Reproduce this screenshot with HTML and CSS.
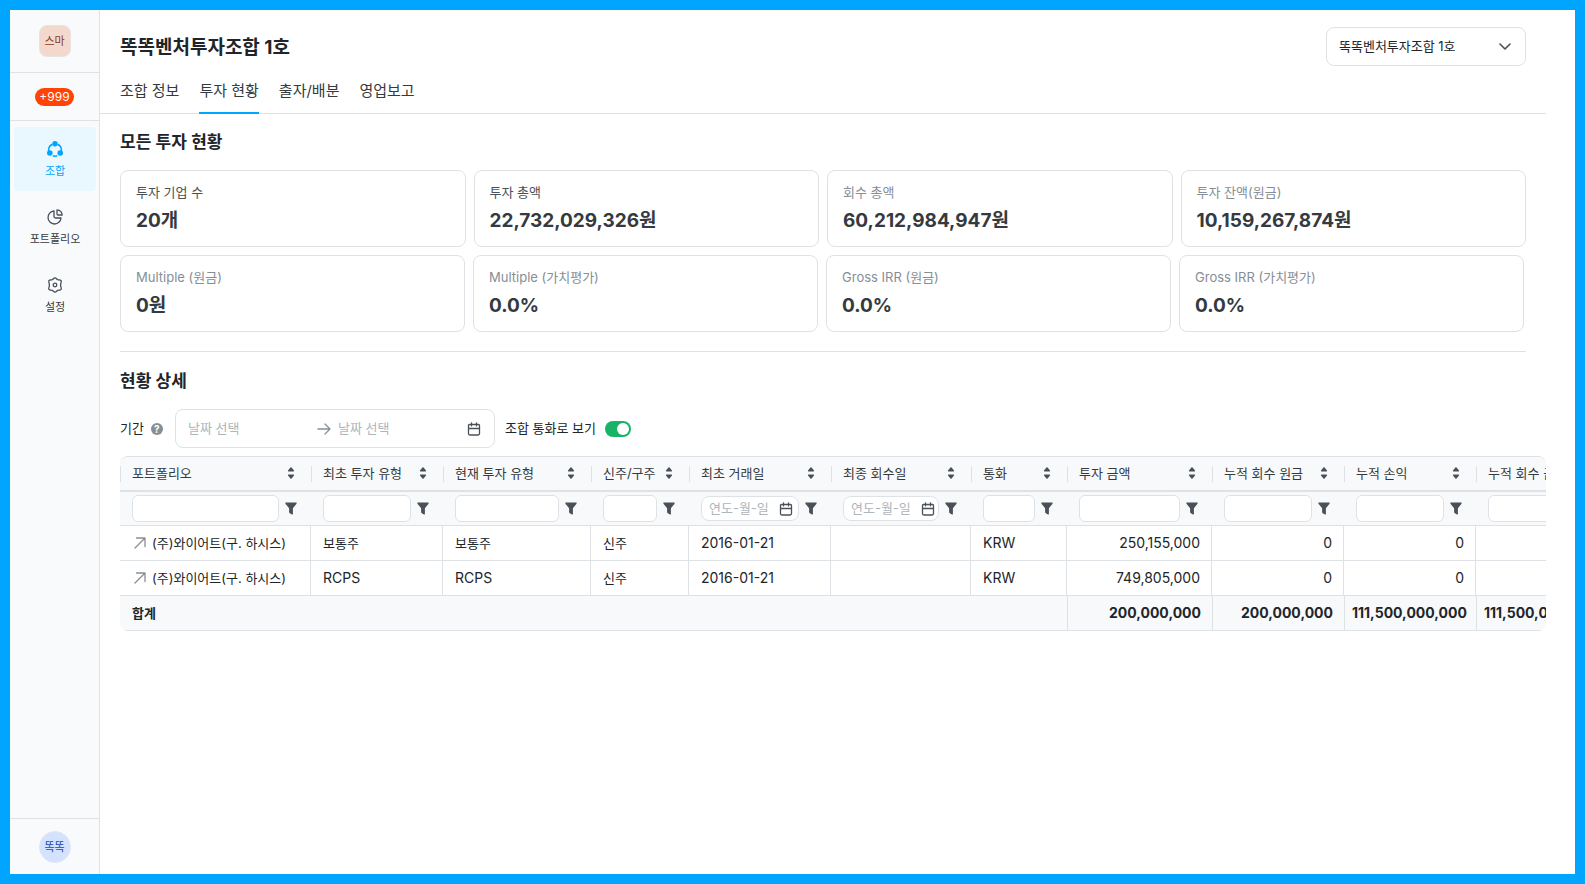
FILE: index.html
```html
<!DOCTYPE html>
<html lang="ko">
  <head>
    <meta charset="utf-8" />
    <meta name="viewport" content="width=device-width,initial-scale=1.0" />
    <title>똑똑벤처투자조합 1호</title>
    <link rel="stylesheet" href="styles.css">
  </head>

  <body>
    <svg class="sprite" aria-hidden="true">
      <symbol id="sort" viewBox="0 0 8 12">
        <path d="M3.400.6q.6-.7 1.200 0l2.400 3q.5.9-.5 1H1.500q-1-.1-.5-1zM3.400 11.400q.6.7 1.200 0l2.400-3q.5-.9-.5-1H1.500q-1 .1-.5 1z" />
      </symbol>
      <symbol id="funnel" viewBox="0 0 12 13">
        <path d="M.4.4h11.2c.3 1-.3 1.6-.9 2.3L7.9 6.200V12c0 .6-.5.7-1 .4l-2-1.200c-.5-.3-.8-.5-.8-1V6.200L1.300 2.700C.7 2 .1 1.400.4.4z" />
      </symbol>
      <symbol id="calendar" viewBox="0 0 14 14">
        <path d="M2.500 2.500h9a1 1 0 0 1 1 1v8a1.500 1.500 0 0 1-1.500 1.500H3a1.500 1.500 0 0 1-1.500-1.500v-8a1 1 0 0 1 1-1zM1.500 6.500h11M4.500.8v3M9.500.8v3" />
      </symbol>
      <symbol id="open" viewBox="0 0 12 12">
        <path d="M1 11 11 1M2.500 1H11v8.500" />
      </symbol>
    </svg>

    <aside class="sidebar">
      <div class="sidebar-top">
        <span class="logo">스마</span>
      </div>
      <div class="sidebar-alert">
        <span class="badge">+999</span>
      </div>
      <nav class="menu">
        <a class="menu-item active" href="#">
          <svg width="16" height="16" viewBox="0 0 16 16">
            <g fill="currentColor">
              <circle cx="8" cy="2.800" r="2.700" />
              <circle cx="2.800" cy="12" r="2.800" />
              <circle cx="13.200" cy="12" r="2.800" />
            </g>
            <path d="M5.500 3.200A6.500 6.500 0 0 0 1.700 10M10.500 3.200A6.500 6.500 0 0 1 14.300 10M5.700 14.700a6.500 6.500 0 0 0 4.600 0" fill="none" stroke="currentColor" stroke-width="1.500" />
          </svg>
          조합
        </a>
        <a class="menu-item" href="#">
          <svg class="line" width="16" height="16" viewBox="0 0 16 16">
            <path d="M7 2A6.500 6.500 0 1 0 14 9H8.500A1.500 1.500 0 0 1 7 7.500z" />
            <path d="M10 .8c2.800.2 5 2.400 5.200 5.200H11a1 1 0 0 1-1-1z" />
          </svg>
          포트폴리오
        </a>
        <a class="menu-item" href="#">
          <svg class="line" width="16" height="16" viewBox="0 0 16 16">
            <path d="M8 .8c1.300 0 1.500 1.300 2.700 1.900 1.200.5 2.600-.2 3.400.9.700 1.200-.5 2.200-.5 4.400s1.200 3.200.5 4.400c-.8 1.100-2.200.4-3.400.9-1.200.6-1.400 1.900-2.700 1.900s-1.500-1.300-2.700-1.900c-1.200-.5-2.600.2-3.400-.9-.7-1.200.5-2.200.5-4.400s-1.200-3.200-.5-4.400c.8-1.100 2.200-.4 3.400-.9C6.500 2.100 6.700.8 8 .8z" />
            <circle cx="8" cy="8" r="1.800" />
          </svg>
          설정
        </a>
      </nav>
      <div class="sidebar-user">
        <span class="avatar">똑똑</span>
      </div>
    </aside>

    <main class="main">
      <header class="header">
        <div class="title-row">
          <h1>똑똑벤처투자조합 1호</h1>
          <div class="fund-select">
            <select aria-label="조합 선택">
              <option>똑똑벤처투자조합 1호</option>
            </select>
            <svg class="line" width="12" height="8" viewBox="0 0 12 8"><path d="M1 1l5 5 5-5" /></svg>
          </div>
        </div>
        <nav class="tabs">
          <a href="#">조합 정보</a>
          <a class="active" href="#">투자 현황</a>
          <a href="#">출자/배분</a>
          <a href="#">영업보고</a>
        </nav>
      </header>

      <section class="summary">
        <h2>모든 투자 현황</h2>
        <div class="cards">
          <div class="card dark"><p>투자 기업 수</p><strong>20개</strong></div>
          <div class="card dark"><p>투자 총액</p><strong>22,732,029,326원</strong></div>
          <div class="card"><p>회수 총액</p><strong>60,212,984,947원</strong></div>
          <div class="card"><p>투자 잔액(원금)</p><strong>10,159,267,874원</strong></div>
        </div>
        <div class="cards cards-rate">
          <div class="card"><p>Multiple (원금)</p><strong>0원</strong></div>
          <div class="card"><p>Multiple (가치평가)</p><strong>0.0%</strong></div>
          <div class="card"><p>Gross IRR (원금)</p><strong>0.0%</strong></div>
          <div class="card"><p>Gross IRR (가치평가)</p><strong>0.0%</strong></div>
        </div>
      </section>

      <section class="detail">
        <h2>현황 상세</h2>
        <div class="controls">
          <label for="dateFrom">기간</label>
          <span class="help">?</span>
          <div class="range">
            <input id="dateFrom" placeholder="날짜 선택" />
            <svg class="line arrow" width="14" height="12" viewBox="0 0 14 12"><path d="M1 6h12M8 1l5 5-5 5" /></svg>
            <input id="dateTo" placeholder="날짜 선택" aria-label="종료일" />
            <svg class="line" width="14" height="14"><use href="#calendar" /></svg>
          </div>
          <label for="currency">조합 통화로 보기</label>
          <input id="currency" class="switch" type="checkbox" checked />
        </div>

        <div class="table-wrap">
          <table>
            <colgroup>
              <col class="w-portfolio" />
              <col class="w-amount" />
              <col class="w-type" />
              <col class="w-stock" />
              <col class="w-trade" />
              <col class="w-exit" />
              <col class="w-currency" />
              <col class="w-invest" />
              <col class="w-amount" />
              <col class="w-amount" />
              <col class="w-amount" />
            </colgroup>
            <thead>
              <tr class="names">
                <th><div>포트폴리오<svg width="8" height="12"><use href="#sort" /></svg></div></th>
                <th><div>최초 투자 유형<svg width="8" height="12"><use href="#sort" /></svg></div></th>
                <th><div>현재 투자 유형<svg width="8" height="12"><use href="#sort" /></svg></div></th>
                <th><div>신주/구주<svg width="8" height="12"><use href="#sort" /></svg></div></th>
                <th><div>최초 거래일<svg width="8" height="12"><use href="#sort" /></svg></div></th>
                <th><div>최종 회수일<svg width="8" height="12"><use href="#sort" /></svg></div></th>
                <th><div>통화<svg width="8" height="12"><use href="#sort" /></svg></div></th>
                <th><div>투자 금액<svg width="8" height="12"><use href="#sort" /></svg></div></th>
                <th><div>누적 회수 원금<svg width="8" height="12"><use href="#sort" /></svg></div></th>
                <th><div>누적 손익<svg width="8" height="12"><use href="#sort" /></svg></div></th>
                <th><div>누적 회수 금액<svg width="8" height="12"><use href="#sort" /></svg></div></th>
              </tr>
              <tr class="filters">
                <td><div><input aria-label="포트폴리오" /><svg width="12" height="13"><use href="#funnel" /></svg></div></td>
                <td><div><input aria-label="최초 투자 유형" /><svg width="12" height="13"><use href="#funnel" /></svg></div></td>
                <td><div><input aria-label="현재 투자 유형" /><svg width="12" height="13"><use href="#funnel" /></svg></div></td>
                <td><div><input aria-label="신주/구주" /><svg width="12" height="13"><use href="#funnel" /></svg></div></td>
                <td><div><span class="date"><input placeholder="연도-월-일" aria-label="최초 거래일" /><svg class="line" width="14" height="14"><use href="#calendar" /></svg></span><svg width="12" height="13"><use href="#funnel" /></svg></div></td>
                <td><div><span class="date"><input placeholder="연도-월-일" aria-label="최종 회수일" /><svg class="line" width="14" height="14"><use href="#calendar" /></svg></span><svg width="12" height="13"><use href="#funnel" /></svg></div></td>
                <td><div><input aria-label="통화" /><svg width="12" height="13"><use href="#funnel" /></svg></div></td>
                <td><div><input aria-label="투자 금액" /><svg width="12" height="13"><use href="#funnel" /></svg></div></td>
                <td><div><input aria-label="누적 회수 원금" /><svg width="12" height="13"><use href="#funnel" /></svg></div></td>
                <td><div><input aria-label="누적 손익" /><svg width="12" height="13"><use href="#funnel" /></svg></div></td>
                <td><div><input aria-label="누적 회수 금액" /><svg width="12" height="13"><use href="#funnel" /></svg></div></td>
              </tr>
            </thead>
            <tbody>
              <tr>
                <td><a href="#"><svg class="line" width="12" height="12"><use href="#open" /></svg>(주)와이어트(구. 하시스)</a></td>
                <td>보통주</td>
                <td>보통주</td>
                <td>신주</td>
                <td class="latin">2016-01-21</td>
                <td></td>
                <td class="latin">KRW</td>
                <td class="num">250,155,000</td>
                <td class="num">0</td>
                <td class="num">0</td>
                <td class="num"></td>
              </tr>
              <tr>
                <td><a href="#"><svg class="line" width="12" height="12"><use href="#open" /></svg>(주)와이어트(구. 하시스)</a></td>
                <td class="latin">RCPS</td>
                <td class="latin">RCPS</td>
                <td>신주</td>
                <td class="latin">2016-01-21</td>
                <td></td>
                <td class="latin">KRW</td>
                <td class="num">749,805,000</td>
                <td class="num">0</td>
                <td class="num">0</td>
                <td class="num"></td>
              </tr>
            </tbody>
            <tfoot>
              <tr>
                <th colspan="7">합계</th>
                <td class="num">200,000,000</td>
                <td class="num">200,000,000</td>
                <td class="num">111,500,000,000</td>
                <td class="num">111,500,000,000</td>
              </tr>
            </tfoot>
          </table>
        </div>
      </section>
    </main>
  </body>
</html>
```
FILE: styles.css
```css
* {
  box-sizing: border-box;
}

body {
  margin: 0;
  min-height: 100vh;
  border: 10px solid #00a5ff;
  display: flex;
  font-family: Inter, "Noto Sans CJK KR", sans-serif;
  font-size: 13px;
  line-height: 20px;
  color: #212529;
  background: #fff;
}

h1,
h2,
p {
  margin: 0;
}

a {
  color: inherit;
  text-decoration: none;
}

input,
select {
  font: inherit;
  color: inherit;
}

input::placeholder {
  color: #adb5bd;
  opacity: 1;
}

svg {
  flex: none;
  fill: #495057;
  color: #495057;
}

.line {
  fill: none;
  stroke: currentColor;
  stroke-width: 1.3;
  stroke-linecap: round;
  stroke-linejoin: round;
}

.sprite {
  display: none;
}

/* sidebar */
.sidebar {
  flex: none;
  width: 90px;
  display: flex;
  flex-direction: column;
  background: #f9fafc;
  border-right: 1px solid #dee2e6;
  font-size: 11px;
}

.sidebar-top,
.sidebar-alert,
.sidebar-user {
  display: flex;
  align-items: center;
  justify-content: center;
  border-bottom: 1px solid #dee2e6;
}

.sidebar-top {
  height: 63px;
}

.sidebar-alert {
  height: 48px;
}

.sidebar-user {
  height: 56px;
  border-top: 1px solid #dee2e6;
  border-bottom: none;
}

.logo,
.avatar {
  width: 32px;
  height: 32px;
  display: flex;
  align-items: center;
  justify-content: center;
  border: 1px solid #e9e4e2;
  border-radius: 8px;
  background: #f3d8cd;
  color: #8f3a1c;
}

.avatar {
  border-color: #e3e6ec;
  border-radius: 50%;
  background: #d3e2ff;
  color: #1c46b0;
}

.badge {
  padding: 0 4px;
  border-radius: 9px;
  background: #ff4405;
  color: #fff;
  font-size: 12px;
  line-height: 18px;
}

.menu {
  flex: 1;
  display: flex;
  flex-direction: column;
  gap: 4px;
  padding: 6px 3px 6px 4px;
}

.menu-item {
  height: 64px;
  display: flex;
  flex-direction: column;
  align-items: center;
  gap: 4px;
  padding-top: 14px;
  border-radius: 4px;
  color: #343a40;
}

.menu-item.active,
.menu-item.active svg {
  color: #00a5ff;
}

.menu-item.active {
  background: #e9f7ff;
}

/* header */
.main {
  flex: 1;
  min-width: 0;
  padding-right: 29px;
}

.header {
  padding: 17px 20px 0;
  border-bottom: 1px solid #dee2e6;
}

.title-row {
  display: flex;
  align-items: center;
  justify-content: space-between;
}

h1 {
  padding-top: 2px;
  font-size: 19px;
  line-height: 28px;
}

h2 {
  font-size: 17px;
  line-height: 24px;
  font-weight: 600;
}

.fund-select {
  position: relative;
  width: 200px;
}

.fund-select select {
  appearance: none;
  display: block;
  width: 100%;
  height: 39px;
  padding: 0 12px 2px;
  border: 1px solid #dee2e6;
  border-radius: 8px;
  background: #fff;
}

.fund-select svg {
  position: absolute;
  top: 16px;
  right: 15px;
  stroke-width: 1.6;
  pointer-events: none;
}

.tabs {
  display: flex;
  gap: 20px;
  margin-bottom: -1px;
  font-size: 15px;
  line-height: 24px;
  color: #343a40;
}

.tabs a {
  padding: 13px 0 9px;
  border-bottom: 2px solid transparent;
}

.tabs a.active {
  border-color: #00a5ff;
}

/* summary cards */
.summary {
  margin: 0 20px;
  padding: 16px 0 19px;
  border-bottom: 1px solid #dee2e6;
}

.cards {
  display: grid;
  grid-template-columns: repeat(4, 1fr);
  gap: 8px;
  margin-top: 16px;
}

.cards-rate {
  margin-top: 8px;
  padding-right: 2px;
}

.card {
  padding: 11px 15px;
  border: 1px solid #dee2e6;
  border-radius: 8px;
}

.card p {
  margin-bottom: 5px;
  color: #868e96;
}

.card.dark p {
  color: #495057;
}

.card strong {
  display: block;
  font-size: 19px;
  line-height: 28px;
  font-weight: 700;
  color: #343a40;
}

/* detail */
.detail {
  padding: 17px 0 20px 20px;
}

.controls {
  display: flex;
  align-items: center;
  margin: 16px 0 8px;
}

.controls label {
  padding-bottom: 2px;
}

.help {
  width: 12px;
  height: 12px;
  margin: 0 12px 0 7px;
  border-radius: 50%;
  background: #868e96;
  color: #fff;
  font-size: 10px;
  font-weight: 700;
  line-height: 12px;
  text-align: center;
}

.range {
  width: 320px;
  height: 39px;
  display: flex;
  align-items: center;
  gap: 7px;
  margin-right: 10px;
  padding: 0 13px 0 12px;
  border: 1px solid #dee2e6;
  border-radius: 8px;
}

.range input {
  flex: 1;
  min-width: 0;
  padding: 0 0 2px;
  border: none;
  outline: none;
}

.arrow {
  color: #868e96;
}

.switch {
  appearance: none;
  width: 26px;
  height: 16px;
  margin: 0 0 0 9px;
  padding: 2px;
  border-radius: 8px;
  background: #adb5bd;
}

.switch::before {
  content: "";
  display: block;
  width: 12px;
  height: 12px;
  border-radius: 50%;
  background: #fff;
}

.switch:checked {
  background: #19b368;
}

.switch:checked::before {
  margin-left: auto;
}

/* table */
.table-wrap {
  overflow: hidden;
  border-top: 1px solid #dee2e6;
  border-radius: 8px;
}

table {
  width: 1488px;
  table-layout: fixed;
  border-collapse: separate;
  border-spacing: 0;
}

.w-portfolio {
  width: 191px;
}

.w-type {
  width: 148px;
}

.w-stock {
  width: 98px;
}

.w-trade {
  width: 142px;
}

.w-exit {
  width: 140px;
}

.w-currency {
  width: 96px;
}

.w-invest {
  width: 145px;
}

.w-amount {
  width: 132px;
}

th,
td {
  height: 35px;
  padding: 0 11px 0 12px;
  border-bottom: 1px solid #dee2e6;
  text-align: left;
  white-space: nowrap;
}

thead th,
thead td {
  padding: 0;
  background: #f8f9fb;
  color: #343a40;
  font-weight: 400;
}

.names th {
  border-bottom: 2px solid #dee2e6;
}

.names div {
  height: 16px;
  display: flex;
  align-items: center;
  justify-content: space-between;
  padding: 0 16px 2px 11px;
  border-left: 1px solid #dee2e6;
}

.filters td {
  height: 34px;
}

.filters div {
  display: flex;
  align-items: center;
  gap: 6px;
  padding: 0 14px 0 12px;
}

.filters input {
  flex: 1;
  min-width: 0;
  width: 100%;
  height: 27px;
  padding: 0 8px;
  border: 1px solid #dee2e6;
  border-radius: 6px;
  background: #fff;
}

.date {
  flex: 1;
  min-width: 0;
  height: 25px;
  display: flex;
  align-items: center;
  padding-left: 7px;
  border: 1px solid #dee2e6;
  border-radius: 8px;
  background: #fff;
}

.filters .date input {
  flex: none;
  width: 70px;
  height: 20px;
  padding: 0 0 2px;
  border: none;
}

tbody td {
  border-right: 1px solid #dee2e6;
}

tbody a {
  display: flex;
  align-items: center;
  gap: 6px;
  padding-left: 2px;
}

tbody a svg {
  color: #868e96;
}

.latin,
.num {
  font-size: 14px;
}

.num {
  text-align: right;
}

tfoot th,
tfoot td {
  background: #f8f9fb;
  font-weight: 700;
}

tfoot td {
  padding: 0 11px 0 7px;
  border-left: 1px solid #dee2e6;
}
```
